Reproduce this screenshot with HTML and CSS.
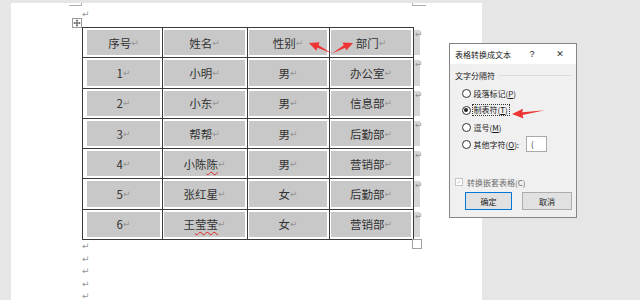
FILE: index.html
```html
<!DOCTYPE html>
<html lang="zh">
<head>
<meta charset="utf-8">
<title>表格转换成文本</title>
<link rel="stylesheet" href="styles.css">
</head>
<body>
<div class="page">
  <span class="crop crop-tl"></span>
  <span class="crop crop-tr"></span>
  <div class="pline"><span class="pm">↵</span></div>
  <div class="table-wrap">
    <span class="move-handle">
      <svg width="10" height="10" viewBox="0 0 10 10"><rect x="0.5" y="0.5" width="9" height="9" fill="#fff" stroke="#9a9a9a"/><path d="M5 1.8V8.2M1.8 5H8.2" stroke="#444" stroke-width="0.9"/><path d="M5 1.5L3.9 2.8H6.1ZM5 8.5L3.9 7.2H6.1ZM1.5 5L2.8 3.9V6.1ZM8.5 5L7.2 3.9V6.1Z" fill="#444"/></svg>
    </span>
    <table class="grid">
      <colgroup><col class="c1"><col class="c2"><col class="c3"><col class="c4"><col class="c5"></colgroup>
      <tr><td class="first"><div class="cell">序号<span class="pm">↵</span></div></td><td><div class="cell">姓名<span class="pm">↵</span></div></td><td><div class="cell">性别<span class="pm">↵</span></div></td><td><div class="cell">部门<span class="pm">↵</span></div></td><td class="eor"><div class="eor-fill"><span class="pm">↵</span></div></td></tr>
      <tr><td class="first"><div class="cell">1<span class="pm">↵</span></div></td><td><div class="cell">小明<span class="pm">↵</span></div></td><td><div class="cell">男<span class="pm">↵</span></div></td><td><div class="cell">办公室<span class="pm">↵</span></div></td><td class="eor"><div class="eor-fill"><span class="pm">↵</span></div></td></tr>
      <tr><td class="first"><div class="cell">2<span class="pm">↵</span></div></td><td><div class="cell">小东<span class="pm">↵</span></div></td><td><div class="cell">男<span class="pm">↵</span></div></td><td><div class="cell">信息部<span class="pm">↵</span></div></td><td class="eor"><div class="eor-fill"><span class="pm">↵</span></div></td></tr>
      <tr><td class="first"><div class="cell">3<span class="pm">↵</span></div></td><td><div class="cell">帮帮<span class="pm">↵</span></div></td><td><div class="cell">男<span class="pm">↵</span></div></td><td><div class="cell">后勤部<span class="pm">↵</span></div></td><td class="eor"><div class="eor-fill"><span class="pm">↵</span></div></td></tr>
      <tr><td class="first"><div class="cell">4<span class="pm">↵</span></div></td><td><div class="cell">小陈<span class="spell">陈</span><span class="pm">↵</span></div></td><td><div class="cell">男<span class="pm">↵</span></div></td><td><div class="cell">营销部<span class="pm">↵</span></div></td><td class="eor"><div class="eor-fill"><span class="pm">↵</span></div></td></tr>
      <tr><td class="first"><div class="cell">5<span class="pm">↵</span></div></td><td><div class="cell">张红星<span class="pm">↵</span></div></td><td><div class="cell">女<span class="pm">↵</span></div></td><td><div class="cell">后勤部<span class="pm">↵</span></div></td><td class="eor"><div class="eor-fill"><span class="pm">↵</span></div></td></tr>
      <tr><td class="first"><div class="cell">6<span class="pm">↵</span></div></td><td><div class="cell">王<span class="spell">莹莹</span><span class="pm">↵</span></div></td><td><div class="cell">女<span class="pm">↵</span></div></td><td><div class="cell">营销部<span class="pm">↵</span></div></td><td class="eor"><div class="eor-fill"><span class="pm">↵</span></div></td></tr>
    </table>
    <span class="resize-handle"></span>
  </div>
  <div class="after">
    <div class="pline2"><span class="pm">↵</span></div>
    <div class="pline2"><span class="pm">↵</span></div>
    <div class="pline2"><span class="pm">↵</span></div>
    <div class="pline2"><span class="pm">↵</span></div>
    <div class="pline2"><span class="pm">↵</span></div>
  </div>
</div>

<div class="dialog">
  <div class="dlg-title">
    <span class="dlg-name">表格转换成文本</span>
    <span class="dlg-help">?</span>
    <span class="dlg-close">✕</span>
  </div>
  <div class="dlg-body">
    <div class="group-head"><span>文字分隔符</span><span class="group-line"></span></div>
    <div class="opt first-opt"><span class="radio"></span><span>段落标记(<u>P</u>)</span></div>
    <div class="opt"><span class="radio on"></span><span class="focus">制表符(<u>T</u>)</span></div>
    <div class="opt"><span class="radio"></span><span>逗号(<u>M</u>)</span></div>
    <div class="opt"><span class="radio"></span><span>其他字符(<u>O</u>):</span><span class="ibox">(</span></div>
    <div class="chk-row"><span class="chk">✓</span><span class="chk-label">转换嵌套表格(C)</span></div>
    <div class="btn-row"><span class="btn primary">确定</span><span class="btn">取消</span></div>
  </div>
</div>

<svg class="arrows" width="640" height="300" viewBox="0 0 640 300">
  <polygon fill="#ee3535" points="309,43 319.5,42.3 318.6,45.2 332,53.5 317.4,47.8 316.3,50.8"/>
  <polygon fill="#ee3535" points="353,43 342.6,42.4 343.7,45.2 332,53.5 345.2,47.8 346.3,50.6"/>
  <polygon fill="#ee3535" points="512,114 523,108.8 522.3,112.2 545,110.2 522.6,115 523.5,118.6"/>
</svg>
</body>
</html>
```

FILE: styles.css
```css
* { box-sizing: border-box; margin: 0; padding: 0; }
html, body { width: 640px; height: 300px; overflow: hidden; }
body {
  background: #e6e6e6;
  font-family: "Noto Sans CJK SC", "Noto Sans", sans-serif;
  position: relative;
}

/* document page */
.page {
  position: relative;
  margin: 3px 0 0 11px;
  width: 471px;
  height: 297px;
  background: #fff;
  padding: 3px 0 0 71px;
}
.crop { position: absolute; border-color: #b0b0b0; border-style: solid; }
.crop-tl { left: 58px; top: 0; width: 13px; height: 3px; border-width: 0 1px 1px 0; }
.crop-tr { left: 401px; top: 0; width: 14px; height: 3px; border-width: 0 0 1px 1px; }

.pm {
  font-family: "DejaVu Sans", sans-serif;
  font-size: 9px;
  color: #959595;
  line-height: 1;
}
.pline { height: 12px; line-height: 12px; }
.pline .pm { vertical-align: middle; }

.table-wrap { position: relative; margin-top: 9px; width: max-content; }
.move-handle { position: absolute; left: -10px; top: -9px; width: 10px; height: 10px; }
.move-handle svg { display: block; }
.resize-handle {
  position: absolute; left: 330px; bottom: -9px;
  width: 10px; height: 10px;
  border: 1px solid #a0a0a0; background: #fff;
}

.grid { border-collapse: collapse; table-layout: fixed; width: 337px; }
.grid .c1 { width: 80px; }
.grid .c2 { width: 85px; }
.grid .c3 { width: 82px; }
.grid .c4 { width: 84px; }
.grid .c5 { width: 6px; }
.grid td { border: 1px solid #3a3a3a; padding: 2px 2px 2px 1px; }
.grid td.first { padding-left: 4px; }
.cell {
  display: flex; align-items: center; justify-content: center;
  height: 25.3px;
  background: #c8c8c8;
  font-size: 11.5px;
  color: #333;
  white-space: nowrap;
}
.cell .pm { margin-top: 1px; }
.spell { text-decoration: underline wavy #e02020; text-decoration-thickness: 1px; text-underline-offset: 2px; }
.grid td.eor { border-top: 0; border-bottom: 0; border-right: 0; padding: 2px 0; }
.eor-fill { position: relative; height: 25.3px; background: #d6d6d6; }
.eor-fill .pm { position: absolute; left: 1px; top: 0; }

.after { margin-top: -2px; }
.pline2 { height: 12.5px; line-height: 12.5px; }
.pline2 .pm { vertical-align: middle; }

/* dialog */
.dialog {
  position: absolute; left: 449px; top: 43px;
  width: 128px; height: 175px;
  border: 1px solid #858585;
  background: #f0f0f0;
  font-size: 8px;
  color: #1a1a1a;
  display: flex; flex-direction: column;
}
.dlg-title {
  height: 20px; background: #fff;
  display: flex; align-items: center;
  padding-left: 5px;
}
.dlg-name { flex: 1; }
.dlg-help { width: 8px; text-align: center; margin-right: 16px; font-family: "Liberation Sans", sans-serif; font-size: 9px; }
.dlg-close { width: 16px; text-align: center; margin-right: 8px; font-family: "DejaVu Sans", sans-serif; font-size: 9px; color: #333; }
.dlg-body { padding: 0 4px 0 5px; display: flex; flex-direction: column; }
.group-head { margin-top: 5px; height: 12px; display: flex; align-items: center; }
.group-line { flex: 1; height: 1px; background: #dcdcdc; margin-left: 4px; }
.opt { display: flex; align-items: center; height: 17px; padding-left: 6.5px; }
.first-opt { margin-top: 3.5px; }
.radio {
  position: relative;
  width: 9px; height: 9px;
  border: 1px solid #333; border-radius: 50%;
  background: #fff; margin-right: 3px; flex: none;
}
.radio.on::after {
  content: ""; position: absolute; left: 1.5px; top: 1.5px;
  width: 4px; height: 4px; border-radius: 50%; background: #222;
}
.focus { border: 1px dotted #333; padding: 0 1px; margin-left: -2px; height: 12px; line-height: 10px; }
.ibox {
  width: 21px; height: 16px; margin-left: 7px;
  border: 1px solid #a9a9a9; background: #fff;
  padding-left: 4px; line-height: 14px;
}
.chk-row { margin-top: 23.5px; height: 12px; display: flex; align-items: center; }
.chk {
  width: 8px; height: 8px; border: 1px solid #c6c6c6; background: #fff;
  font-family: "DejaVu Sans", sans-serif; font-size: 6px; line-height: 6px;
  color: #b0b0b0; text-align: center;
}
.chk-label { margin-left: 4px; color: #6d6d6d; }
.btn-row { margin-top: 4px; padding-left: 10px; display: flex; gap: 10px; }
.btn {
  width: 50px; height: 18px;
  border: 1px solid #adadad; background: #e1e1e1;
  display: flex; align-items: center; justify-content: center;
}
.btn.primary { width: 47px; border-color: #0078d7; }

.arrows { position: absolute; left: 0; top: 0; pointer-events: none; }
```
